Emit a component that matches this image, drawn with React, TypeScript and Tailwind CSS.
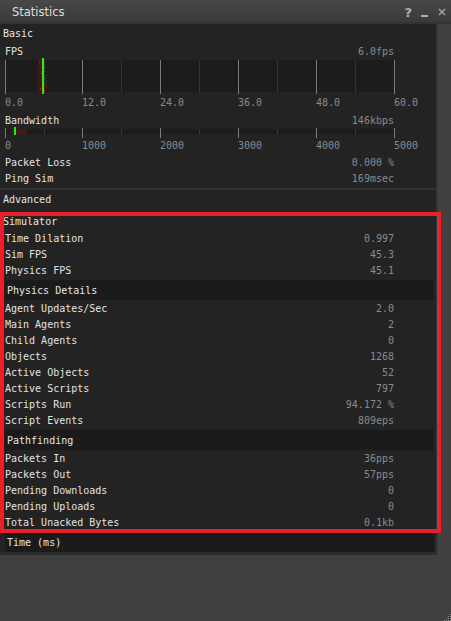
import React from "react";

type StatRowProps = {
  label: string;
  value: string;
};

const mono = "font-['DejaVu_Sans_Mono','Liberation_Mono',monospace]";

const StatRow: React.FC<StatRowProps> = ({ label, value }) => {
  return (
    <div className="h-4 pt-[2px] flex items-center justify-between pl-[5px] pr-[42px] text-[10px] leading-4">
      <span className="text-[#e2e2e2] whitespace-pre">{label}</span>
      <span className="text-[#8a8a8a] whitespace-pre">{value}</span>
    </div>
  );
};

const SubHeader: React.FC<{ title: string }> = ({ title }) => {
  return (
    <div className="h-[20px] ml-[5px] mr-[2px] bg-[#1b1b1b] flex items-center pl-[2px] text-[10px] text-[#e6e6e6]">
      {title}
    </div>
  );
};

const majors = [0.5, 77.5, 155.5, 233.5, 311.5, 389.5];
const minors = [39.5, 116.5, 194.5, 272.5, 350.5];

const AxisLabels: React.FC<{ labels: string[]; className: string }> = ({ labels, className }) => {
  return (
    <div className={`${className} pt-[2px] flex items-center pl-[5px] text-[10px] text-[#8a8a8a]`}>
      {labels.map((l, i) => (
        <span key={l} className={`${i === 0 ? "w-[77px]" : "w-[78px]"} shrink-0`}>
          {l}
        </span>
      ))}
    </div>
  );
};

const dots = [
  [34, 3], [38, 5], [40, 8], [36, 14], [39, 12], [41, 16], [38, 20], [40, 24],
  [41, 27], [35, 29], [39, 31], [40, 19], [37, 10], [41, 22],
];

const FpsGraph = () => (
  <div className="h-[35px] pl-[5px]">
    <svg width="392" height="35" className="block overflow-visible">
      <rect x="0" y="1" width="390" height="32" fill="#1c1c1c" />
      {minors.map((x) => (
        <line key={x} x1={x} x2={x} y1="1" y2="34" stroke="#333333" />
      ))}
      {majors.map((x) => (
        <line key={x} x1={x} x2={x} y1="1" y2="35" stroke="#7a7a7a" />
      ))}
      <rect x="33" y="1" width="4" height="32" fill="#451616" />
      {dots.map(([x, y], i) => (
        <rect key={i} x={x} y={y} width="1" height="1" fill="#e01818" />
      ))}
      <rect x="37" y="-1" width="2" height="36" fill="#1ef01e" />
    </svg>
  </div>
);

const BandwidthBar = () => (
  <div className="h-[10px] pl-[5px]">
    <svg width="392" height="10" className="block overflow-visible">
      <rect x="0" y="1" width="390" height="5" fill="#1c1c1c" />
      {minors.map((x) => (
        <line key={x} x1={x} x2={x} y1="1" y2="6" stroke="#3a3a3a" />
      ))}
      {majors.map((x) => (
        <line key={x} x1={x} x2={x} y1="0" y2="10" stroke="#7a7a7a" />
      ))}
      <rect x="6" y="1" width="16" height="5" fill="#4a1616" />
      <rect x="9" y="-1" width="2" height="8" fill="#1ef01e" />
    </svg>
  </div>
);

export default function App() {
  return (
    <div className={`w-[451px] h-[621px] bg-[#404040] relative overflow-hidden ${mono}`}>
      {/* title bar */}
      <div className="h-[22px] pt-[3px] flex items-center bg-gradient-to-b from-[#484848] to-[#3a3a3a]">
        <span className="pl-3 text-[11.5px] text-[#dedede] font-['DejaVu_Sans','Liberation_Sans',sans-serif]">
          Statistics
        </span>
        <div className="ml-auto flex items-center">
          <span className="text-[13px] font-bold text-[#b0b0b0] font-['DejaVu_Sans',sans-serif] mr-[9px]">?</span>
          <span className="w-[7px] h-[2px] bg-[#b0b0b0] mt-[6px] mr-[10px]" />
          <svg width="8" height="8" className="mr-[5px] mb-[1px]">
            <path d="M1 1 L7 7 M7 1 L1 7" stroke="#a8a8a8" strokeWidth="1.3" />
          </svg>
        </div>
      </div>
      <div className="h-[2px] bg-[#333333]" />

      <div className="flex">
        <div className="w-[436px] bg-[#232323]">
          {/* Basic */}
          <div className="h-[17px] pt-[2px] flex items-center pl-[3px] text-[10px] text-[#e6e6e6]">Basic</div>
          <div className="h-[18px] pt-[2px] flex items-center justify-between pl-[5px] pr-[42px] text-[10px]">
            <span className="text-[#e2e2e2]">FPS</span>
            <span className="text-[#8a8a8a]">6.0fps</span>
          </div>
          <FpsGraph />
          <AxisLabels className="h-[15px]" labels={["0.0", "12.0", "24.0", "36.0", "48.0", "60.0"]} />
          <div className="h-[3px]" />
          <StatRow label="Bandwidth" value="146kbps" />
          <BandwidthBar />
          <AxisLabels className="h-[13px]" labels={["0", "1000", "2000", "3000", "4000", "5000"]} />
          <div className="h-[3px]" />
          <StatRow label="Packet Loss" value="0.000 %" />
          <StatRow label="Ping Sim" value="169msec" />
          <div className="h-[2px]" />
          <div className="h-[2px] bg-[#303030]" />

          {/* Advanced */}
          <div className="h-[17px] pt-[2px] flex items-center pl-[3px] text-[10px] text-[#e6e6e6]">Advanced</div>
          <div className="h-[4px]" />
          <div className="h-[19px] pt-[1px] flex items-center pl-[3px] text-[10px] text-[#e6e6e6]">Simulator</div>
          <StatRow label="Time Dilation" value="0.997" />
          <StatRow label="Sim FPS" value="45.3" />
          <StatRow label="Physics FPS" value="45.1" />
          <div className="h-[2px]" />
          <SubHeader title="Physics Details" />
          <StatRow label="Agent Updates/Sec" value="2.0" />
          <StatRow label="Main Agents" value="2" />
          <StatRow label="Child Agents" value="0" />
          <StatRow label="Objects" value="1268" />
          <StatRow label="Active Objects" value="52" />
          <StatRow label="Active Scripts" value="797" />
          <StatRow label="Scripts Run" value="94.172 %" />
          <StatRow label="Script Events" value="809eps" />
          <div className="h-[2px]" />
          <SubHeader title="Pathfinding" />
          <StatRow label="Packets In" value="36pps" />
          <StatRow label="Packets Out" value="57pps" />
          <StatRow label="Pending Downloads" value="0" />
          <StatRow label="Pending Uploads" value="0" />
          <StatRow label="Total Unacked Bytes" value="0.1kb" />
          <div className="h-[2px]" />
          <SubHeader title="Time (ms)" />
          <div className="h-[3px] bg-[#2b2b2b]" />
        </div>
        <div className="w-[2px] bg-[#363636]" />
      </div>

      {/* annotation box */}
      <div className="absolute left-0 top-[212px] w-[441px] h-[321px] border-4 border-[#e8202a] pointer-events-none" />

      {/* resize grip */}
      <svg width="8" height="8" className="absolute right-0 bottom-0">
        {[
          [7, 1], [7, 3], [5, 3], [7, 5], [5, 5], [3, 5], [7, 7], [5, 7], [3, 7], [1, 7],
        ].map(([x, y], i) => (
          <rect key={i} x={x} y={y} width="1" height="1" fill="#8a8a8a" />
        ))}
      </svg>
    </div>
  );
}
